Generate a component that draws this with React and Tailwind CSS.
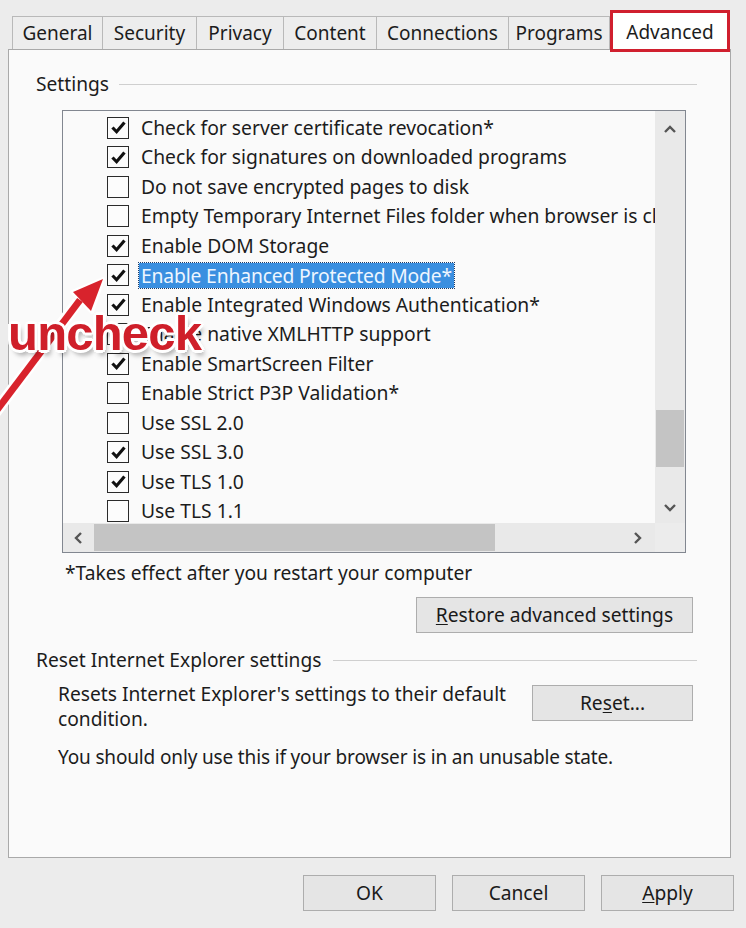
import React from "react";

const rows = [
  { label: "Check for server certificate revocation*", checked: true },
  { label: "Check for signatures on downloaded programs", checked: true },
  { label: "Do not save encrypted pages to disk", checked: false },
  { label: "Empty Temporary Internet Files folder when browser is closed", checked: false },
  { label: "Enable DOM Storage", checked: true },
  { label: "Enable Enhanced Protected Mode*", checked: true, selected: true },
  { label: "Enable Integrated Windows Authentication*", checked: true },
  { label: "Enable native XMLHTTP support", checked: true },
  { label: "Enable SmartScreen Filter", checked: true },
  { label: "Enable Strict P3P Validation*", checked: false },
  { label: "Use SSL 2.0", checked: false },
  { label: "Use SSL 3.0", checked: true },
  { label: "Use TLS 1.0", checked: true },
  { label: "Use TLS 1.1", checked: false },
];

const tabs = [
  { name: "General", w: "w-[90px]" },
  { name: "Security", w: "w-[94px]" },
  { name: "Privacy", w: "w-[87px]" },
  { name: "Content", w: "w-[93px]" },
  { name: "Connections", w: "w-[132px]" },
  { name: "Programs", w: "w-[102px]" },
];

function Checkbox({ checked }) {
  return (
    <div className="w-[22px] h-[22px] shrink-0 border border-[#2a2a2a] bg-[#fcfcfc] flex items-center justify-center">
      {checked && (
        <svg width="17" height="17" viewBox="0 0 16 16">
          <path d="M2.3 8 L6.2 12 L13.6 3.3" fill="none" stroke="#111" strokeWidth="3" />
        </svg>
      )}
    </div>
  );
}

function Chevron({ dir }) {
  const d = {
    up: "M3 10 L8 5 L13 10",
    down: "M3 6 L8 11 L13 6",
    left: "M10 3 L5 8 L10 13",
    right: "M6 3 L11 8 L6 13",
  }[dir];
  return (
    <svg width="16" height="16" viewBox="0 0 16 16">
      <path d={d} fill="none" stroke="#555" strokeWidth="2.4" />
    </svg>
  );
}

function Button({ children, className = "" }) {
  return (
    <div
      className={`h-[36px] flex items-center justify-center border border-[#adadad] bg-[#e5e5e5] text-[19.2px] text-[#1a1a1a] ${className}`}
    >
      {children}
    </div>
  );
}

export default function App() {
  return (
    <div className="relative w-[746px] h-[928px] overflow-hidden bg-[#ececec] font-['Noto_Sans',sans-serif] text-[#1c1c1c]">
      <div className="px-[8px] pt-[16px]">
        {/* tab strip */}
        <div className="flex items-end h-[33px] pl-[4px]">
          {tabs.map((t, i) => (
            <div
              key={t.name}
              className={`${t.w} h-[33px] flex items-center justify-center border-t border-l border-[#b9b9b9] bg-[#ededed] text-[19px] ${
                i === tabs.length - 1 ? "border-r" : ""
              }`}
            >
              {t.name}
            </div>
          ))}
          <div className="relative z-10 w-[120px] h-[42px] mb-[-3px] border-[3px] border-[#d01f2e] bg-white flex items-start justify-center pt-[5px] text-[19px]">
            Advanced
          </div>
        </div>

        {/* panel */}
        <div className="h-[809px] w-[723px] border border-[#a9a9a9] bg-[#fafafa]">
          <div className="mt-[22px] pl-[27px] pr-[33px] flex items-center h-[24px]">
            <span className="text-[19.2px] leading-[24px]">Settings</span>
            <div className="flex-1 h-px bg-[#cfcfcf] ml-[10px]" />
          </div>

          {/* list box */}
          <div className="ml-[53px] mt-[14px] w-[624px] h-[443px] border border-[#828790] grid grid-cols-[1fr_30px] grid-rows-[1fr_29px]">
            <div className="overflow-hidden bg-[#fafafa] pt-[2px] pl-[44px]">
              {rows.map((r) => (
                <div key={r.label} className="h-[29.5px] flex items-center whitespace-nowrap">
                  <Checkbox checked={r.checked} />
                  {r.selected ? (
                    <span className="ml-[10px] px-[2px] leading-[25px] text-[19.3px] tracking-[-0.15px] bg-[#3a8fe0] text-[#eef6ff] outline outline-1 outline-dotted outline-[#1c3a66]">
                      {r.label}
                    </span>
                  ) : (
                    <span className="ml-[12px] text-[19.3px] leading-[24px]">{r.label}</span>
                  )}
                </div>
              ))}
            </div>
            <div className="bg-[#e9e9e9] flex flex-col items-center">
              <div className="h-[38px] flex items-center justify-center">
                <Chevron dir="up" />
              </div>
              <div className="h-[261px]" />
              <div className="w-[28px] h-[57px] bg-[#c4c4c4]" />
              <div className="flex-1 flex items-end pb-[8px]">
                <Chevron dir="down" />
              </div>
            </div>
            <div className="bg-[#e9e9e9] flex items-center">
              <div className="w-[31px] flex justify-center">
                <Chevron dir="left" />
              </div>
              <div className="w-[401px] h-[27px] bg-[#c4c4c4]" />
              <div className="flex-1 flex justify-end pr-[10px]">
                <Chevron dir="right" />
              </div>
            </div>
            <div className="bg-[#ececec]" />
          </div>

          <div className="pl-[56px] mt-[8px] text-[19.2px] leading-[24px]">
            *Takes effect after you restart your computer
          </div>

          <div className="flex justify-end pr-[37px] mt-[12px]">
            <Button className="w-[277px]">
              <span>
                <span className="underline underline-offset-2">R</span>estore advanced settings
              </span>
            </Button>
          </div>

          <div className="pl-[27px] pr-[33px] mt-[15px] flex items-center">
            <span className="text-[19.2px] leading-[24px]">Reset Internet Explorer settings</span>
            <div className="flex-1 h-px bg-[#cfcfcf] ml-[12px]" />
          </div>

          <div className="pl-[49px] pr-[37px] mt-[9px] flex items-start justify-between">
            <div className="w-[462px] text-[19.2px] leading-[25px]">
              Resets Internet Explorer's settings to their default condition.
            </div>
            <Button className="w-[161px] mt-[4px]">
              <span>
                Re<span className="underline underline-offset-2">s</span>et...
              </span>
            </Button>
          </div>

          <div className="pl-[49px] mt-[14px] text-[19px] leading-[24px] tracking-[-0.15px]">
            You should only use this if your browser is in an unusable state.
          </div>
        </div>

        {/* dialog buttons */}
        <div className="flex justify-end gap-[16px] pt-[17px] pr-[4px]">
          <Button className="w-[133px] border-[#3c7fb1] bg-[#e3ebf2]">OK</Button>
          <Button className="w-[133px]">Cancel</Button>
          <Button className="w-[133px]">
            <span>
              <span className="underline underline-offset-2">A</span>pply
            </span>
          </Button>
        </div>
      </div>

      {/* annotation */}
      <svg className="absolute left-0 top-0 pointer-events-none" width="746" height="928">
        <g stroke="#fff" strokeWidth="4" strokeLinejoin="round">
          <path d="M-6 414 L78 302" stroke="#fff" strokeWidth="12" />
          <polygon points="103,279 72,292 92,312" fill="#fff" />
        </g>
        <path d="M-6 414 L80 300" stroke="#d8232c" strokeWidth="7" />
        <polygon points="103,279 73,292 91,311" fill="#d8232c" />
      </svg>
      <div className="absolute left-[8px] top-[305px] font-['Liberation_Sans',sans-serif] font-bold text-[49px] leading-[56px] tracking-[-0.8px] text-[#cf1f2a] [text-shadow:2px_2px_0_#fff,-2px_-2px_0_#fff,2px_-2px_0_#fff,-2px_2px_0_#fff,0_3px_0_#fff,3px_0_0_#fff,-3px_0_0_#fff,0_-3px_0_#fff,3px_5px_5px_rgba(0,0,0,0.35)]">
        uncheck
      </div>
    </div>
  );
}
